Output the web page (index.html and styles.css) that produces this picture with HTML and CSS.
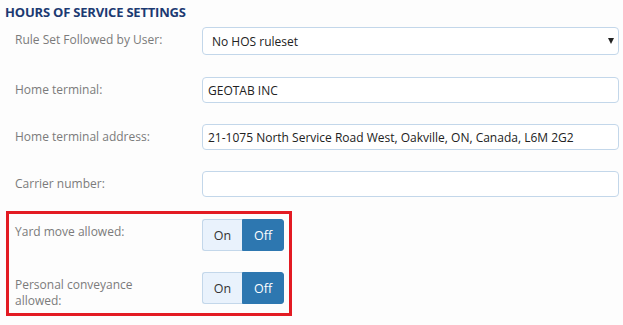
FILE: index.html
```html
<!DOCTYPE html>
<html>
<head>
    <title>Hours of Service Settings</title>
    <link rel="stylesheet" href="styles.css">
</head>
<body>
    <div class="hosSettings">
        <h2 class="sectionTitle">Hours of Service Settings</h2>

        <div class="formRow rowSelect">
            <label class="fieldLabel">Rule Set Followed by User:</label>
            <div class="selectBox">
                <select class="fieldSelect">
                    <option>No HOS ruleset</option>
                </select>
            </div>
        </div>
        <div class="formRow">
            <label class="fieldLabel">Home terminal:</label>
            <input type="text" class="fieldInput" value="GEOTAB INC">
        </div>
        <div class="formRow">
            <label class="fieldLabel">Home terminal address:</label>
            <input type="text" class="fieldInput" value="21-1075 North Service Road West, Oakville, ON, Canada, L6M 2G2">
        </div>
        <div class="formRow lastRow">
            <label class="fieldLabel">Carrier number:</label>
            <input type="text" class="fieldInput" value="">
        </div>

        <div class="highlightBox">
            <div class="formRow toggleRow">
                <label class="fieldLabel">Yard move allowed:</label>
                <div class="toggle">
                    <button class="toggleOn">On</button>
                    <button class="toggleOff">Off</button>
                </div>
            </div>
            <div class="formRow toggleRow">
                <label class="fieldLabel">Personal conveyance allowed:</label>
                <div class="toggle">
                    <button class="toggleOn">On</button>
                    <button class="toggleOff">Off</button>
                </div>
            </div>
        </div>
    </div>
</body>
</html>
```

FILE: styles.css
```css
body {
    margin: 0;
    background: #fdfdfd;
    font-family: "Open Sans", "Noto Sans", sans-serif;
    font-size: 12px;
    color: #222;
}
.hosSettings {
    padding: 0 4px 0 0;
}
h2.sectionTitle {
    margin: 0 0 5px 0;
    padding: 2px 5px 0 5px;
    height: 20px;
    font-size: 13px;
    letter-spacing: -0.2px;
    line-height: 20px;
    font-weight: bold;
    text-transform: uppercase;
    color: #1c3a72;
}
.formRow {
    display: grid;
    grid-template-columns: 187px 1fr;
    align-items: start;
    margin: 0 0 21px 15px;
}
.formRow.rowSelect {
    margin-bottom: 22px;
}
.formRow.lastRow {
    margin-bottom: 14px;
}
.fieldLabel {
    padding: 5px 20px 0 0;
    line-height: 16px;
    color: #7b7b7b;
}
.fieldInput {
    box-sizing: border-box;
    height: 26px;
    margin: 0;
    padding: 0 5px;
    border: 1px solid #c3d7ea;
    border-radius: 4px;
    background: #fff;
    font-family: inherit;
    font-size: 12px;
    color: #222;
}
.selectBox {
    position: relative;
}
.selectBox::after {
    content: "";
    position: absolute;
    right: 5px;
    top: 11px;
    border-left: 3.5px solid transparent;
    border-right: 3.5px solid transparent;
    border-top: 6px solid #222;
    pointer-events: none;
}
.fieldSelect {
    appearance: none;
    -webkit-appearance: none;
    box-sizing: border-box;
    width: 100%;
    height: 28px;
    margin: 0;
    padding: 0 9px;
    border: 1px solid #c3d7ea;
    border-radius: 4px;
    background: #fff;
    font-family: inherit;
    font-size: 12px;
    color: #222;
}
.highlightBox {
    box-sizing: border-box;
    width: 286px;
    margin: 0 0 0 6px;
    padding: 5px 0 4px 6px;
    border: 3px solid #e31b23;
}
.highlightBox .formRow {
    margin: 0;
}
.highlightBox .formRow + .formRow {
    margin-top: 21px;
}
.toggle {
    display: flex;
    width: 82px;
    height: 32px;
}
.toggle button {
    margin: 0;
    padding: 0;
    font-family: inherit;
    font-size: 12.5px;
    cursor: pointer;
}
.toggleOn {
    width: 40px;
    background: #e9f2fc;
    border: 1px solid #c3d7ea;
    border-right: none;
    border-radius: 3px 0 0 3px;
    color: #333;
}
.toggleOff {
    width: 42px;
    background: #2d77b0;
    border: 1px solid #2d77b0;
    border-radius: 0 3px 3px 0;
    color: #fff;
}
```
